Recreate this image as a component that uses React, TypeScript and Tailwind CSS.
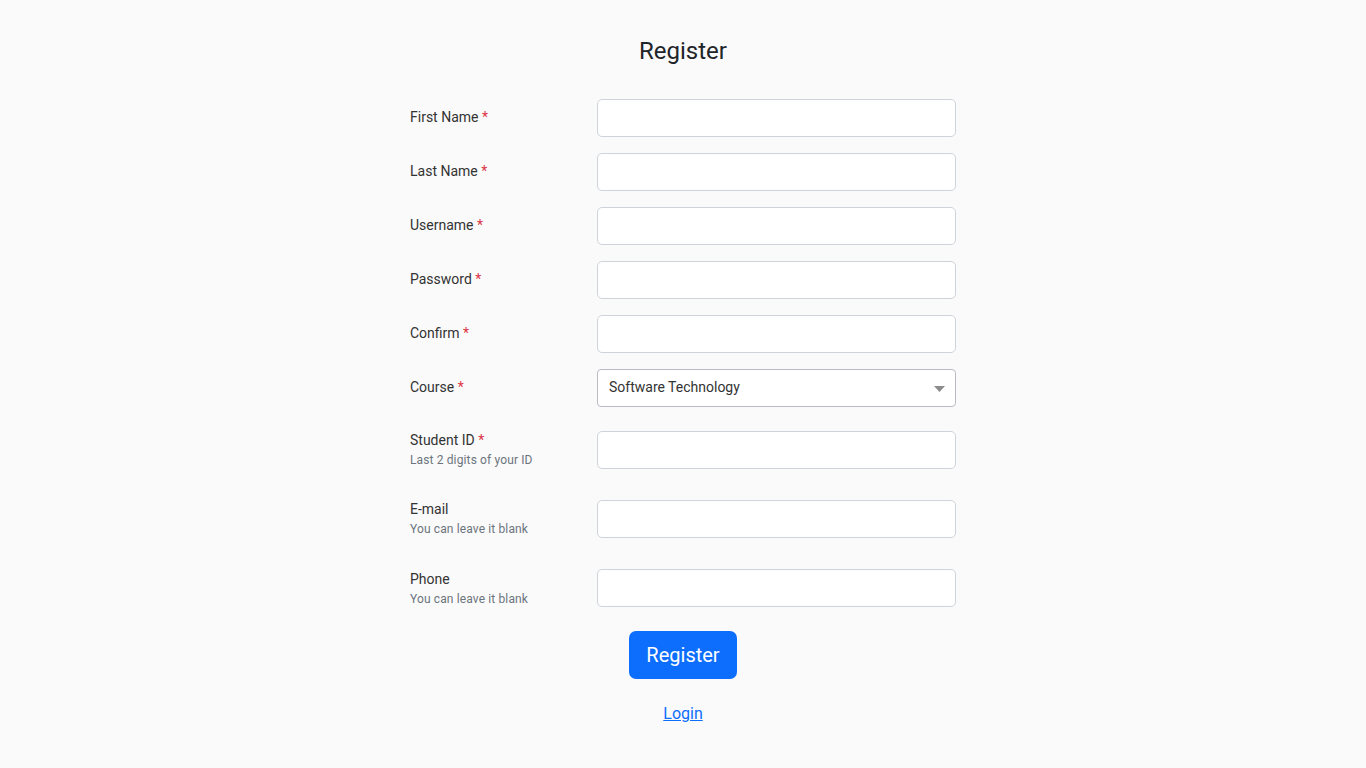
import React from "react";

const F = { fontFamily: "Roboto, 'Liberation Sans', sans-serif" };

function Label({ text, req, hint }: { text: string; req?: boolean; hint?: string }) {
  return (
    <div className="w-[187px] shrink-0">
      <div className="text-[14px] leading-[21px] text-[#333333]">
        {text}
        {req && <span className="text-[#dc3545]"> *</span>}
      </div>
      {hint && <div className="text-[12px] leading-[18px] tracking-[0.13px] text-[#6c757d]">{hint}</div>}
    </div>
  );
}

function Input() {
  return (
    <input
      className="w-[359px] h-[38px] rounded-[5px] border border-[#ced4da] bg-white px-3 text-[14px] outline-none"
      style={F}
    />
  );
}

export default function App() {
  const simple = ["First Name", "Last Name", "Username", "Password", "Confirm"];
  return (
    <div className="min-h-[768px] bg-[#fafafa] flex flex-col items-center" style={F}>
      <h1 className="mt-[36px] text-[24px] leading-[30px] text-[#212529] font-normal">Register</h1>
      <div className="mt-[33px] w-[546px] flex flex-col">
        {simple.map((t) => (
          <div key={t} className="flex items-center h-[38px] mb-4">
            <div className="mb-[2px]">
              <Label text={t} req />
            </div>
            <Input />
          </div>
        ))}
        <div className="flex items-center h-[38px]">
          <div className="mb-[2px]">
            <Label text="Course" req />
          </div>
          <div className="relative w-[359px] h-[38px] rounded-[4px] border border-[#b8bcc2] bg-white flex items-center px-[11px]">
            <span className="text-[14px] text-[#333333] mb-[1px]">Software Technology</span>
            <svg className="absolute right-[10px] top-[16px]" width="11" height="6" viewBox="0 0 11 6">
              <path d="M0 0 L11 0 L5.5 6 Z" fill="#8c8c8c" />
            </svg>
          </div>
        </div>
        <div className="flex items-start mt-6 h-[53px]">
          <div className="-mt-[1px]">
            <Label text="Student ID" req hint="Last 2 digits of your ID" />
          </div>
          <Input />
        </div>
        <div className="flex items-start mt-4 h-[53px]">
          <div className="-mt-[1px]">
            <Label text="E-mail" hint="You can leave it blank" />
          </div>
          <Input />
        </div>
        <div className="flex items-start mt-4 h-[38px]">
          <div>
            <Label text="Phone" hint="You can leave it blank" />
          </div>
          <Input />
        </div>
      </div>
      <button
        className="mt-6 h-[48px] px-[17px] rounded-[7px] bg-[#0d6efd] text-white text-[20px] leading-[30px]"
        style={F}
      >
        Register
      </button>
      <a href="#" className="mt-[23px] text-[16px] leading-[24px] text-[#0d6efd] underline">
        Login
      </a>
    </div>
  );
}
